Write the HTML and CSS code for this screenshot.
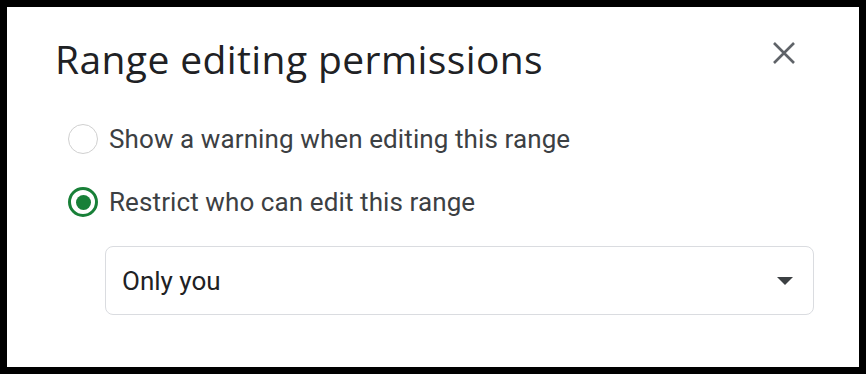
FILE: index.html
```html
<!DOCTYPE html>
<html>
<head>
<meta charset="utf-8">
<link rel="stylesheet" href="styles.css">
</head>
<body>
<div class="frame">
  <div class="dialog">
    <div class="header">
      <h1 class="title">Range editing permissions</h1>
      <button class="close" aria-label="Close">
        <svg width="22" height="22" viewBox="0 0 22 22"><path d="M1 1 L21 21 M21 1 L1 21" stroke="#5f6368" stroke-width="2.6" fill="none"/></svg>
      </button>
    </div>
    <div class="options">
      <label class="option">
        <span class="radio"></span>
        <span class="label">Show a warning when editing this range</span>
      </label>
      <label class="option">
        <span class="radio checked"><span class="dot"></span></span>
        <span class="label">Restrict who can edit this range</span>
      </label>
    </div>
    <div class="select">
      <span class="select-text">Only you</span>
      <span class="caret"></span>
    </div>
  </div>
</div>
</body>
</html>
```
FILE: styles.css
```css
html, body { margin: 0; padding: 0; background: #000; }
.frame {
  width: 866px; height: 374px; box-sizing: border-box;
  border: 7px solid #000; background: #fff;
}
.dialog {
  height: 100%; box-sizing: border-box;
  padding: 26px 45px 0 48px;
  font-family: Roboto, "Liberation Sans", sans-serif;
}
.header { display: flex; align-items: flex-start; justify-content: space-between; }
.title {
  margin: 0; font-family: "Open Sans", Roboto, sans-serif; font-weight: 400;
  font-size: 39px; line-height: 52px; color: #202124; letter-spacing: 0.4px;
}
.close {
  border: 0; background: none; padding: 0; margin: 9px 19px 0 0; width: 22px; height: 22px;
  display: flex;
}
.options { display: flex; flex-direction: column; gap: 33px; margin-top: 39px; padding-left: 13px; }
.option { display: flex; align-items: center; gap: 11px; }
.radio {
  width: 30px; height: 30px; box-sizing: border-box; border-radius: 50%; flex: none;
  border: 1.5px solid #d0d0d0; display: flex; align-items: center; justify-content: center;
}
.radio.checked { border: 3px solid #188038; }
.dot { width: 15px; height: 15px; border-radius: 50%; background: #188038; }
.label { font-size: 26px; color: #3c4043; line-height: 30px; letter-spacing: 0.1px; }
.select {
  margin: 29px 0 0 50px; height: 69px; box-sizing: border-box;
  border: 1px solid #dadce0; border-radius: 8px;
  display: flex; align-items: center; justify-content: space-between;
  padding: 0 20px 0 16px;
}
.select-text { font-size: 26px; color: #202124; }
.caret {
  width: 0; height: 0; border-left: 8px solid transparent; border-right: 8px solid transparent;
  border-top: 8px solid #3c4043;
}
```
